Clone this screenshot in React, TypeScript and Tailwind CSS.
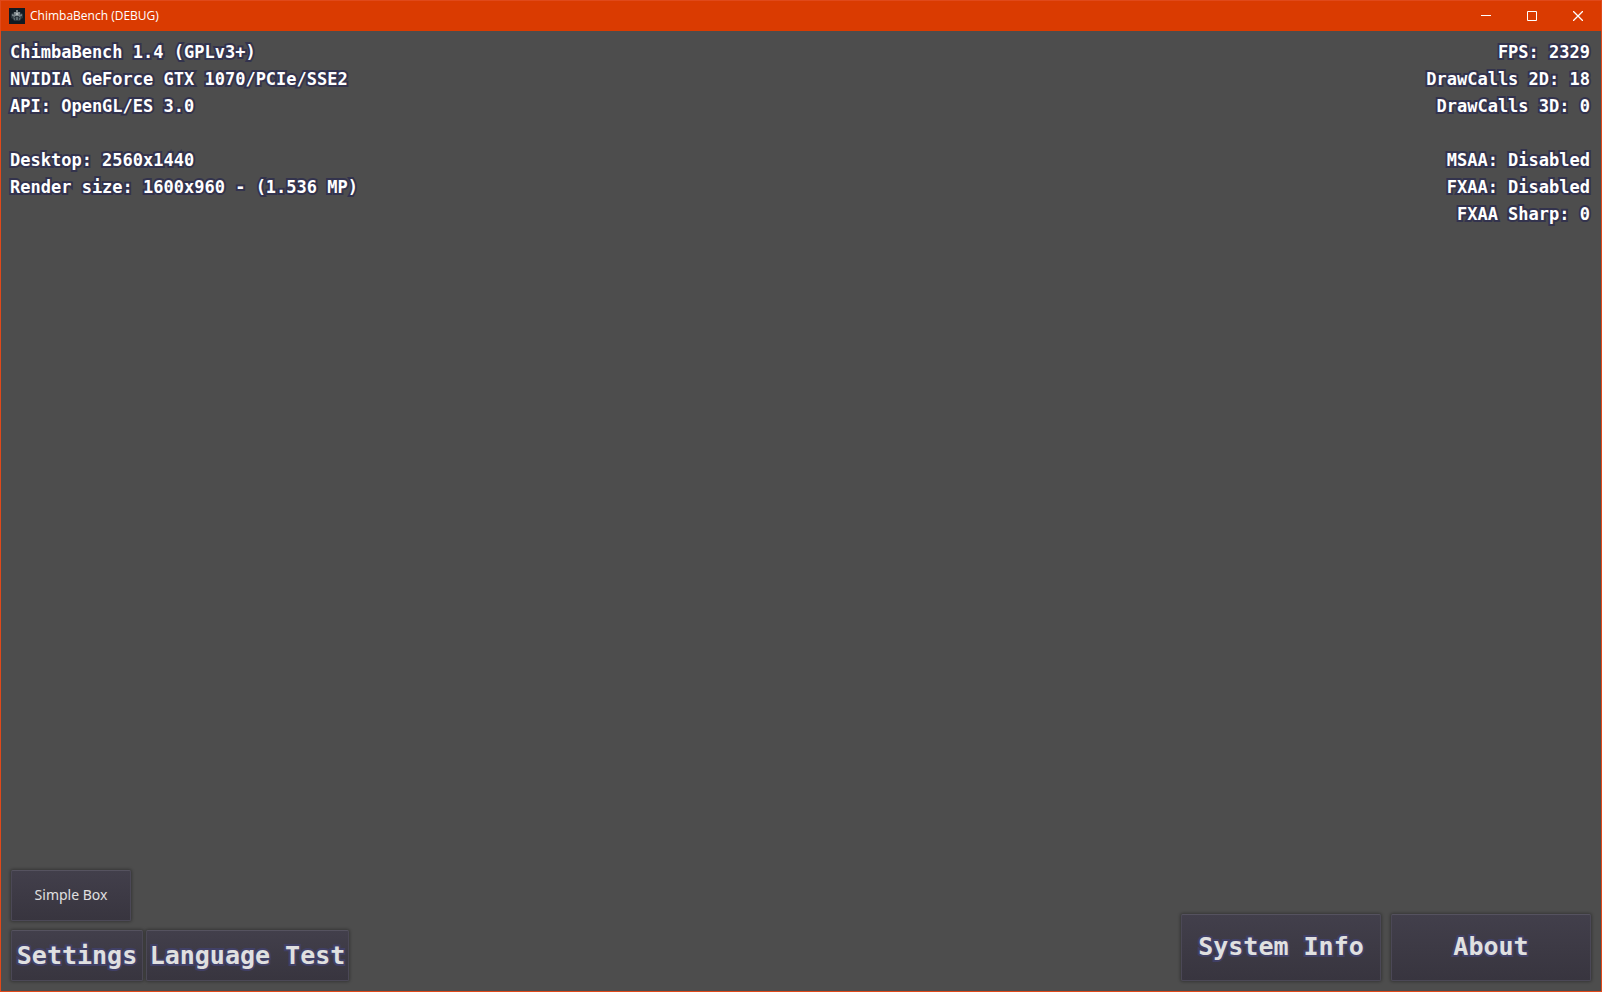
const systemLines = [
  "ChimbaBench 1.4 (GPLv3+)",
  "NVIDIA GeForce GTX 1070/PCIe/SSE2",
  "API: OpenGL/ES 3.0",
  "",
  "Desktop: 2560x1440",
  "Render size: 1600x960 - (1.536 MP)",
];

const renderLines = [
  "FPS: 2329",
  "DrawCalls 2D: 18",
  "DrawCalls 3D: 0",
  "",
  "MSAA: Disabled",
  "FXAA: Disabled",
  "FXAA Sharp: 0",
];

const buttonClass =
  "rounded-xs border border-[#4b4856] border-t-[#55525f] bg-linear-to-b from-[#423f4b] to-[#38353f] text-[#e0e0e0] shadow-[0_0_3px_1px_rgba(0,0,0,0.3)]";

const pixelClass =
  "font-['DejaVu_Sans_Mono',monospace] text-[25px] leading-[30px] font-bold whitespace-pre [-webkit-text-stroke:4px_#414066] [paint-order:stroke]";

const AppIcon = () => (
  <svg width="16" height="16" viewBox="0 0 16 16" aria-hidden="true">
    <rect width="16" height="16" fill="#111a22" />
    <path d="M2 6l3-2h6l3 2v4l-2 1-1 2H5l-1-2-2-1z" fill="#2c363d" />
    <path d="M7 2h2v2H7zM3 6l3 1v2L3 8zM13 6l-3 1v2l3-1z" fill="#737e83" />
    <path d="M5 4h6v2l-1 2H6L5 6z" fill="#7f898d" />
    <path d="M7 5h2v2H7z" fill="#b4bbbd" />
    <path d="M4 9l2 1v2H5zM12 9l-2 1v2h1zM7 9h2v3H7z" fill="#59666b" />
  </svg>
);

const TitleBar = () => (
  <header className="flex h-[30px] items-center justify-between bg-[#da3b01] text-white">
    <div className="flex items-center gap-1 pl-2">
      <AppIcon />
      <h1 className="pl-px font-['Open_Sans',sans-serif] text-[12px] leading-4">
        ChimbaBench (DEBUG)
      </h1>
    </div>

    <div className="flex h-full">
      <button aria-label="Minimize" className="flex w-[46px] items-center justify-center">
        <svg width="10" height="10" fill="none" stroke="currentColor">
          <path d="M0 4.5h10" />
        </svg>
      </button>
      <button aria-label="Maximize" className="flex w-[46px] items-center justify-center">
        <svg width="10" height="10" fill="none" stroke="currentColor">
          <path d="M.5.5h9v9h-9z" />
        </svg>
      </button>
      <button aria-label="Close" className="flex w-[46px] items-center justify-center">
        <svg width="10" height="10" fill="none" stroke="currentColor" strokeWidth="1.3">
          <path d="M0 0l10 10M10 0L0 10" />
        </svg>
      </button>
    </div>
  </header>
);

const Stats = ({ lines }: { lines: string[] }) => (
  <div className="font-['DejaVu_Sans_Mono',monospace] text-[17px] leading-[27px] font-bold text-white [-webkit-text-stroke:4px_#33334d] [paint-order:stroke]">
    {lines.map((line, i) => (
      <p key={i} className="min-h-[27px]">
        {line}
      </p>
    ))}
  </div>
);

export default function App() {
  return (
    <div className="flex min-h-screen flex-col border border-[#e0491a] bg-[#4d4d4d]">
      <TitleBar />

      <main className="flex grow flex-col justify-between p-2">
        <div className="flex justify-between px-px">
          <Stats lines={systemLines} />
          <div className="pr-0.5 text-right">
            <Stats lines={renderLines} />
          </div>
        </div>

        <div className="flex items-end justify-between px-0.5 pb-0.5">
          <div className="flex flex-col items-start gap-[9px]">
            <button
              className={`${buttonClass} h-[51px] w-[120px] pb-0.5 font-['Noto_Sans',sans-serif] text-[14px]`}
            >
              Simple Box
            </button>
            <div className="flex gap-[3px]">
              <button className={`${buttonClass} ${pixelClass} h-[51px] w-[132px]`}>
                Settings
              </button>
              <button className={`${buttonClass} ${pixelClass} h-[51px] w-[203px]`}>
                Language Test
              </button>
            </div>
          </div>

          <div className="flex gap-[10px]">
            <button className={`${buttonClass} ${pixelClass} h-[67px] w-[200px] pb-0.5`}>
              System Info
            </button>
            <button className={`${buttonClass} ${pixelClass} h-[67px] w-[200px] pb-0.5`}>
              About
            </button>
          </div>
        </div>
      </main>
    </div>
  );
}
